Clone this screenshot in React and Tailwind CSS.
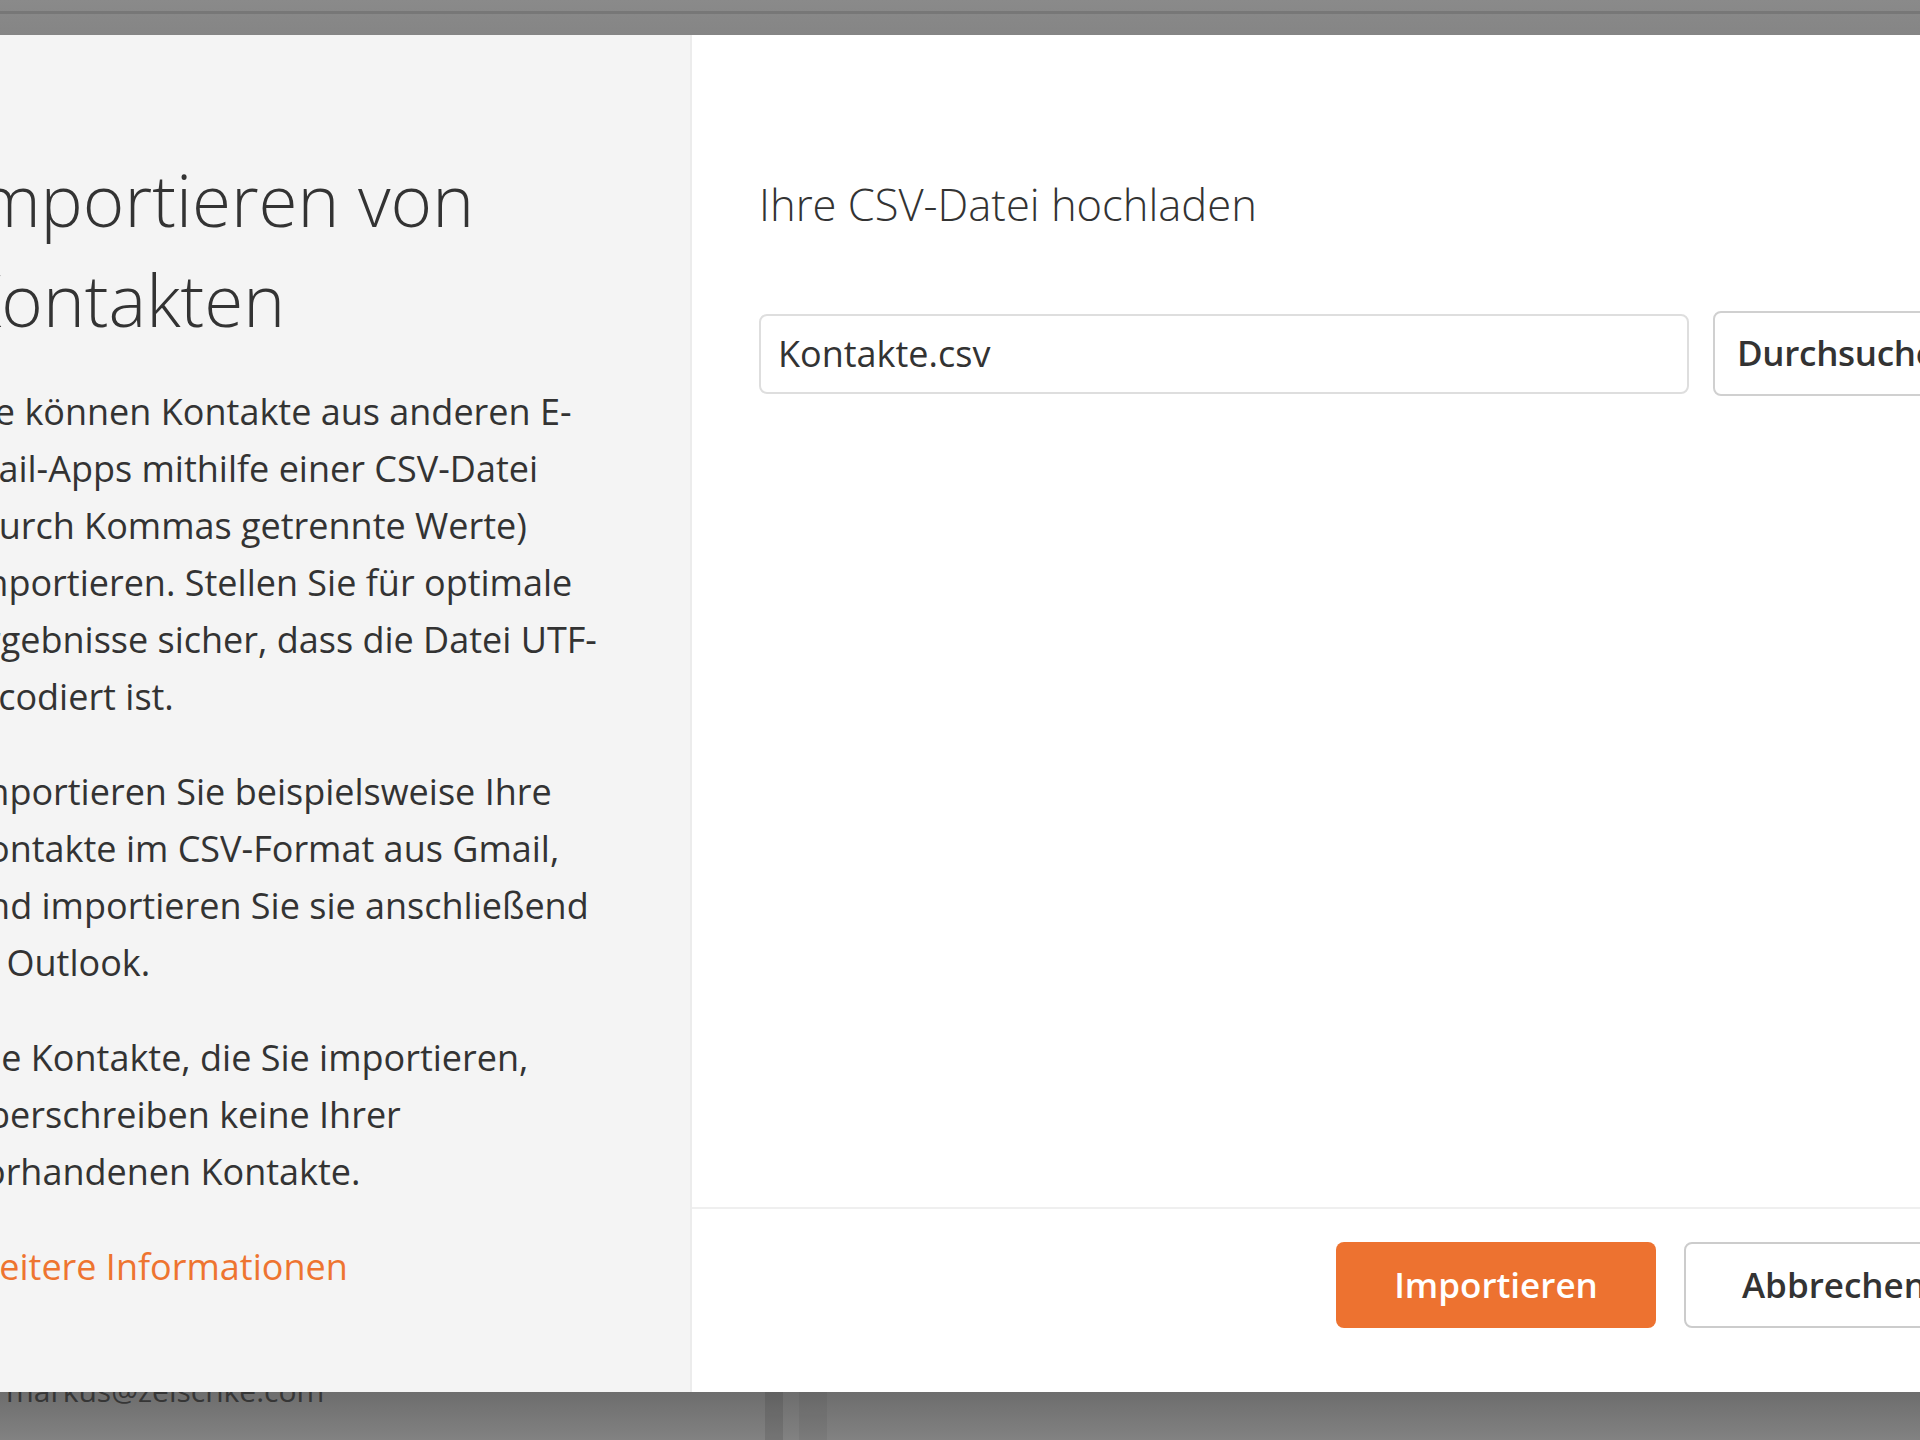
export default function App() {
  const body = "text-[36px] leading-[57px] text-[#333333] whitespace-nowrap";
  return (
    <div className="relative w-[1920px] h-[1440px] overflow-hidden bg-[#7a7a7a] font-['Open_Sans','Noto_Sans',sans-serif]">
      {/* mailbox page behind the dimmed overlay */}
      <div className="flex flex-col h-full">
        <div className="h-[35px] flex flex-col bg-gradient-to-b from-[#8a8a8a] to-[#858585]">
          <div className="h-[11px]" />
          <div className="h-[3px] bg-[#777777]" />
        </div>
        <div className="flex-1 bg-[#747474]" />
        <div className="h-[48px] flex bg-gradient-to-b from-[#6d6d6d] to-[#828282]">
          <div className="w-[765px] pl-[6px]">
            <div className="-mt-[21px] text-[30px] leading-[40px] text-[#363636] whitespace-nowrap">
              markus@zeischke.com
            </div>
          </div>
          <div className="w-[18px] bg-black/10" />
          <div className="w-[16px]" />
          <div className="w-[28px] bg-black/[0.05]" />
        </div>
      </div>

      {/* import dialog */}
      <div className="absolute top-[35px] left-[-100px] w-[2150px] h-[1357px] flex bg-white">
        <aside className="w-[792px] h-full bg-[#f4f4f4] border-r-2 border-[#ececec] pl-[66px] pt-[115px]">
          <h1 className="-ml-[6px] text-[71px] leading-[100px] font-light text-[#333333] whitespace-nowrap">
            Importieren von
            <br />
            Kontakten
          </h1>
          <p className={`mt-[33px] ${body}`}>
            Sie können Kontakte aus anderen E-
            <br />
            Mail-Apps mithilfe einer CSV-Datei
            <br />
            (durch Kommas getrennte Werte)
            <br />
            importieren. Stellen Sie für optimale
            <br />
            Ergebnisse sicher, dass die Datei UTF-
            <br />
            8-codiert ist.
          </p>
          <p className={`mt-[38px] ${body}`}>
            Importieren Sie beispielsweise Ihre
            <br />
            Kontakte im CSV-Format aus Gmail,
            <br />
            und importieren Sie sie anschließend
            <br />
            in Outlook.
          </p>
          <p className={`mt-[38px] ${body}`}>
            Die Kontakte, die Sie importieren,
            <br />
            überschreiben keine Ihrer
            <br />
            vorhandenen Kontakte.
          </p>
          <a className="block mt-[38px] text-[36px] leading-[57px] text-[#ee7430] whitespace-nowrap cursor-pointer">
            Weitere Informationen
          </a>
        </aside>

        <section className="flex-1 h-full flex flex-col">
          <div className="flex-1 pl-[67px] pt-[140px]">
            <h2 className="text-[43.5px] leading-[60px] font-light text-[#333333] whitespace-nowrap">
              Ihre CSV-Datei hochladen
            </h2>
            <div className="mt-[76px] flex items-center gap-[24px]">
              <div className="w-[930px] h-[80px] flex items-center border-2 border-[#dedede] rounded-[8px] px-[17px] text-[36px] text-[#333333] bg-white">
                Kontakte.csv
              </div>
              <button className="h-[85px] px-[22px] border-2 border-[#d0d0d0] rounded-[8px] bg-white text-[35px] font-semibold text-[#333333] tracking-[-0.3px] whitespace-nowrap">
                Durchsuchen
              </button>
            </div>
          </div>
          <div className="h-[185px] border-t-2 border-[#efefef] flex justify-end items-start gap-[28px] pr-[66px] pt-[33px]">
            <button className="w-[320px] h-[86px] rounded-[8px] bg-[#ed7230] text-white text-[35px] font-semibold">
              Importieren
            </button>
            <button className="w-[300px] h-[86px] rounded-[8px] border-2 border-[#cccccc] bg-white text-[#333333] text-[35px] font-semibold">
              Abbrechen
            </button>
          </div>
        </section>
      </div>
    </div>
  );
}
